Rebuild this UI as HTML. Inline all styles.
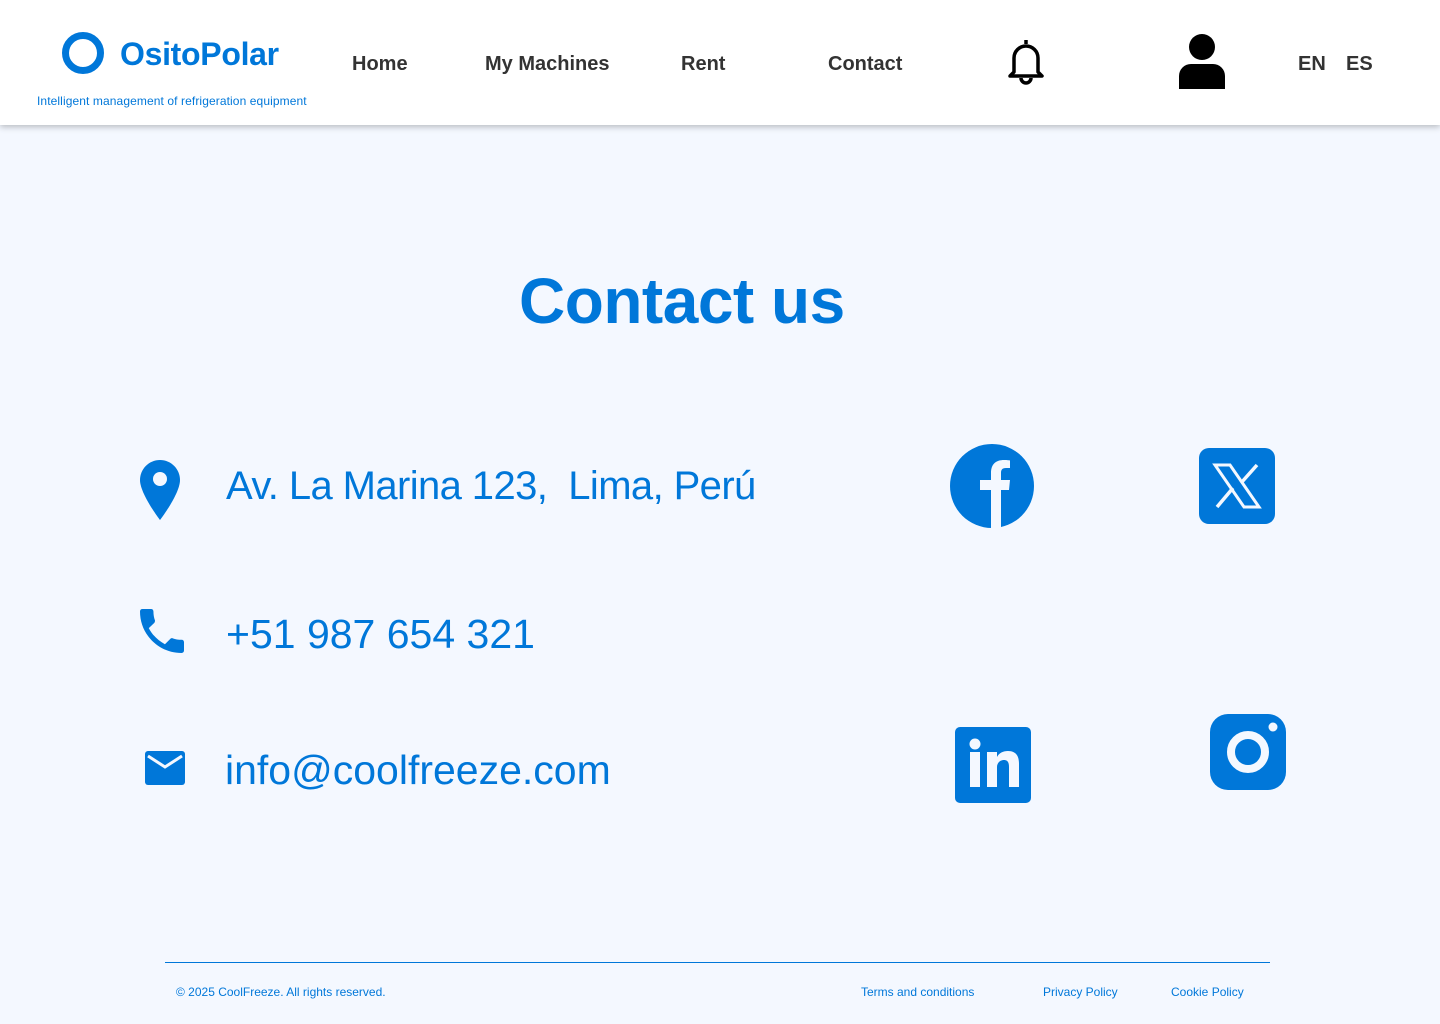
<!DOCTYPE html>
<html><head><meta charset="utf-8"><style>
*{margin:0;padding:0;box-sizing:border-box}
body{width:1440px;height:1024px;background:#f4f8ff;font-family:"Liberation Sans",sans-serif;position:relative;overflow:hidden;color:#0077d9}
.hdr{position:absolute;left:0;top:0;width:1440px;height:125px;background:#fff;box-shadow:0 2px 6px rgba(0,0,0,.25)}
.a{position:absolute;white-space:nowrap}
.nav{font-size:20px;color:#333;font-weight:bold;top:53px}
.big{font-size:41px;color:#0077d9}
.ft{font-size:12px;top:985px}
</style></head><body>
<div class="hdr">
 <svg class="a" style="left:61px;top:31px" width="44" height="44"><circle cx="22" cy="22" r="17.5" fill="none" stroke="#0077d9" stroke-width="7"/></svg>
 <div class="a" style="left:120px;top:36px;font-size:32px;font-weight:bold;color:#0077d9;letter-spacing:-0.3px">OsitoPolar</div>
 <div class="a" style="left:37px;top:94px;font-size:12px;color:#0077d9;letter-spacing:0.1px">Intelligent management of refrigeration equipment</div>
 <div class="a nav" style="left:352px">Home</div>
 <div class="a nav" style="left:485px">My Machines</div>
 <div class="a nav" style="left:681px">Rent</div>
 <div class="a nav" style="left:828px">Contact</div>
 <svg class="a" style="left:1005px;top:36px" width="42" height="50" viewBox="0 0 42 50"><path d="M21 4v4M9 36V22a12 12 0 0 1 24 0v14l4 4H5z" fill="none" stroke="#000" stroke-width="3.5" stroke-linejoin="round"/><path d="M16 42a5 5 0 0 0 10 0" fill="none" stroke="#000" stroke-width="3.5"/></svg>
 <svg class="a" style="left:1178px;top:32px" width="48" height="58"><circle cx="24" cy="15" r="13" fill="#000"/><path d="M1 57V44a12 12 0 0 1 12-12h22a12 12 0 0 1 12 12v13z" fill="#000"/></svg>
 <div class="a nav" style="left:1298px;color:#333">EN</div>
 <div class="a nav" style="left:1346px;color:#333">ES</div>
</div>
<div class="a" style="left:519px;top:264px;font-size:64px;font-weight:bold;letter-spacing:-0.5px">Contact us</div>

<svg class="a" style="left:139px;top:459px" width="42" height="62" viewBox="0 0 42 62"><path d="M21 1C10 1 1 10 1 21c0 14 20 40 20 40s20-26 20-40C41 10 32 1 21 1z" fill="#0077d9"/><circle cx="21" cy="20" r="7" fill="#f4f8ff"/></svg>
<div class="a big" style="left:226px;top:464px;font-size:40px;letter-spacing:-0.6px">Av. La Marina 123,&nbsp; Lima, Perú</div>

<svg class="a" style="left:140px;top:609px" width="44" height="44" viewBox="3 3 18 18"><path d="M6.6 10.8c1.4 2.8 3.8 5.1 6.6 6.6l2.2-2.2c.3-.3.7-.4 1-.2 1.1.4 2.3.6 3.6.6.6 0 1 .4 1 1V20c0 .6-.4 1-1 1C10.6 21 3 13.4 3 4c0-.6.4-1 1-1h3.5c.6 0 1 .4 1 1 0 1.3.2 2.5.6 3.6.1.3 0 .7-.2 1z" fill="#0077d9"/></svg>
<div class="a big" style="left:226px;top:611px">+51 987 654 321</div>

<svg class="a" style="left:145px;top:751px" width="40" height="34" viewBox="0 0 40 34"><rect x="0" y="0" width="40" height="34" rx="3" fill="#0077d9"/><path d="M3 5l17 11L37 5" fill="none" stroke="#f4f8ff" stroke-width="3"/></svg>
<div class="a big" style="left:225px;top:747px">info@coolfreeze.com</div>

<svg class="a" style="left:950px;top:444px" width="85" height="86" viewBox="0 0 85 86"><circle cx="42" cy="42" r="42" fill="#0077d9"/><path d="M30 36h11v-7c0-9 5-13 13-13 3 0 6 .4 6 .4V24h-4c-4 0-5 2-5 5v7h9l-1 10h-8v40H41V46H30z" fill="#f4f8ff"/></svg>
<svg class="a" style="left:1199px;top:448px" width="76" height="76" viewBox="0 0 76 76"><rect width="76" height="76" rx="10" fill="#0077d9"/><path d="M16 17h15l29 42H45z" fill="none" stroke="#f4f8ff" stroke-width="3"/><path d="M58 17L42 35M18 59l16-19" stroke="#f4f8ff" stroke-width="3.5"/></svg>
<svg class="a" style="left:955px;top:727px" width="76" height="76" viewBox="0 0 76 76"><rect width="76" height="76" rx="5" fill="#0077d9"/><rect x="15" y="25" width="10" height="35" fill="#f4f8ff"/><circle cx="20" cy="17" r="5.5" fill="#f4f8ff"/><path d="M32 25h10v5c2-4 6-6 11-6 8 0 11 5 11 13v23H54V40c0-4-1-7-5-7s-7 3-7 7v20H32z" fill="#f4f8ff"/></svg>
<svg class="a" style="left:1210px;top:714px" width="76" height="76" viewBox="0 0 76 76"><rect width="76" height="76" rx="18" fill="#0077d9"/><circle cx="38" cy="38" r="17" fill="none" stroke="#f4f8ff" stroke-width="8"/><circle cx="63" cy="13" r="4.5" fill="#f4f8ff"/></svg>

<div class="a" style="left:165px;top:962px;width:1105px;height:1px;background:#0077d9"></div>
<div class="a ft" style="left:176px">© 2025 CoolFreeze. All rights reserved.</div>
<div class="a ft" style="left:861px">Terms and conditions</div>
<div class="a ft" style="left:1043px">Privacy Policy</div>
<div class="a ft" style="left:1171px">Cookie Policy</div>
</body></html>
